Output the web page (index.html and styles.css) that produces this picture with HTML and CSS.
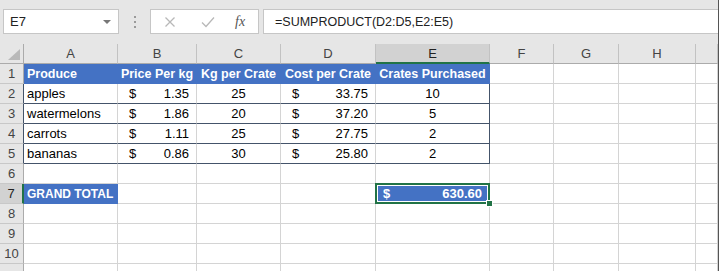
FILE: index.html
```html
<!DOCTYPE html>
<html lang="en">

<head>
    <meta charset="UTF-8">
    <meta name="viewport" content="width=device-width, initial-scale=1.0">
    <title>Produce Sheet</title>
    <link rel="stylesheet" href="styles.css">
</head>

<body>
    <div class="app">
        <div class="toolbar">
            <div class="name-box">
                <span>E7</span>
                <span class="caret"></span>
            </div>
            <div class="grip">
                <svg width="4" height="12" viewBox="0 0 4 12">
                    <rect x="1" y="0" width="2" height="2" fill="#9a9a9a" />
                    <rect x="1" y="5" width="2" height="2" fill="#9a9a9a" />
                    <rect x="1" y="10" width="2" height="2" fill="#9a9a9a" />
                </svg>
            </div>
            <div class="fx-buttons">
                <svg class="btn-icon" width="12" height="12" viewBox="0 0 12 12">
                    <path d="M1.5 1.5 L10.5 10.5 M10.5 1.5 L1.5 10.5" stroke="#b8b8b8" stroke-width="1.3" fill="none" />
                </svg>
                <svg class="btn-icon" width="14" height="12" viewBox="0 0 14 12">
                    <path d="M1 6.5 L5 10.5 L13 1.5" stroke="#b8b8b8" stroke-width="1.3" fill="none" />
                </svg>
                <span class="fx">fx</span>
            </div>
            <div class="formula">=SUMPRODUCT(D2:D5,E2:E5)</div>
        </div>

        <div class="sheet">
            <!-- column headers -->
            <div class="corner">
                <svg width="14" height="12" viewBox="0 0 14 12">
                    <polygon points="13,0 13,11 1,11" fill="#b9b9b9" />
                </svg>
            </div>
            <div class="ch">A</div>
            <div class="ch">B</div>
            <div class="ch">C</div>
            <div class="ch">D</div>
            <div class="ch ch-active">E</div>
            <div class="ch">F</div>
            <div class="ch">G</div>
            <div class="ch">H</div>
            <div class="ch"></div>

            <!-- row 1 -->
            <div class="rh">1</div>
            <div class="c hd">Produce</div>
            <div class="c hd ctr">Price Per kg</div>
            <div class="c hd ctr">Kg per Crate</div>
            <div class="c hd ctr">Cost per Crate</div>
            <div class="c hd ctr">Crates Purchased</div>
            <div class="c"></div>
            <div class="c"></div>
            <div class="c"></div>
            <div class="c"></div>

            <!-- row 2 -->
            <div class="rh rh-tb">2</div>
            <div class="c tb">apples</div>
            <div class="c tb cur"><span>$</span><span>1.35</span></div>
            <div class="c tb ctr">25</div>
            <div class="c tb cur"><span>$</span><span>33.75</span></div>
            <div class="c tb tr ctr">10</div>
            <div class="c"></div>
            <div class="c"></div>
            <div class="c"></div>
            <div class="c"></div>

            <!-- row 3 -->
            <div class="rh rh-tb">3</div>
            <div class="c tb">watermelons</div>
            <div class="c tb cur"><span>$</span><span>1.86</span></div>
            <div class="c tb ctr">20</div>
            <div class="c tb cur"><span>$</span><span>37.20</span></div>
            <div class="c tb tr ctr">5</div>
            <div class="c"></div>
            <div class="c"></div>
            <div class="c"></div>
            <div class="c"></div>

            <!-- row 4 -->
            <div class="rh rh-tb">4</div>
            <div class="c tb">carrots</div>
            <div class="c tb cur"><span>$</span><span>1.11</span></div>
            <div class="c tb ctr">25</div>
            <div class="c tb cur"><span>$</span><span>27.75</span></div>
            <div class="c tb tr ctr">2</div>
            <div class="c"></div>
            <div class="c"></div>
            <div class="c"></div>
            <div class="c"></div>

            <!-- row 5 -->
            <div class="rh rh-tb">5</div>
            <div class="c tb">bananas</div>
            <div class="c tb cur"><span>$</span><span>0.86</span></div>
            <div class="c tb ctr">30</div>
            <div class="c tb cur"><span>$</span><span>25.80</span></div>
            <div class="c tb tr ctr">2</div>
            <div class="c"></div>
            <div class="c"></div>
            <div class="c"></div>
            <div class="c"></div>

            <!-- row 6 -->
            <div class="rh">6</div>
            <div class="c"></div>
            <div class="c"></div>
            <div class="c"></div>
            <div class="c"></div>
            <div class="c"></div>
            <div class="c"></div>
            <div class="c"></div>
            <div class="c"></div>
            <div class="c"></div>

            <!-- row 7 -->
            <div class="rh rh-active">7</div>
            <div class="c hd total">GRAND TOTAL</div>
            <div class="c"></div>
            <div class="c"></div>
            <div class="c"></div>
            <div class="c hd cur sel"><span>$</span><span>630.60</span></div>
            <div class="c"></div>
            <div class="c"></div>
            <div class="c"></div>
            <div class="c"></div>

            <!-- row 8 -->
            <div class="rh">8</div>
            <div class="c"></div>
            <div class="c"></div>
            <div class="c"></div>
            <div class="c"></div>
            <div class="c"></div>
            <div class="c"></div>
            <div class="c"></div>
            <div class="c"></div>
            <div class="c"></div>

            <!-- row 9 -->
            <div class="rh">9</div>
            <div class="c"></div>
            <div class="c"></div>
            <div class="c"></div>
            <div class="c"></div>
            <div class="c"></div>
            <div class="c"></div>
            <div class="c"></div>
            <div class="c"></div>
            <div class="c"></div>

            <!-- row 10 -->
            <div class="rh">10</div>
            <div class="c"></div>
            <div class="c"></div>
            <div class="c"></div>
            <div class="c"></div>
            <div class="c"></div>
            <div class="c"></div>
            <div class="c"></div>
            <div class="c"></div>
            <div class="c"></div>

            <!-- row 11, only its top edge shows -->
            <div class="rh"></div>
            <div class="c"></div>
            <div class="c"></div>
            <div class="c"></div>
            <div class="c"></div>
            <div class="c"></div>
            <div class="c"></div>
            <div class="c"></div>
            <div class="c"></div>
            <div class="c"></div>
        </div>
    </div>
</body>

</html>
```

FILE: styles.css
```css
body {
    margin: 0;
    font-family: "Liberation Sans", Arial, sans-serif;
    background-color: #e6e6e6;
    overflow: hidden;
}

.app {
    width: 719px;
    height: 271px;
    box-sizing: border-box;
    border-right: 1px solid #555;
    overflow: hidden;
    background-color: #e6e6e6;
}

/* formula toolbar */
.toolbar {
    height: 44px;
    display: flex;
    align-items: flex-start;
    padding-top: 9px;
    box-sizing: border-box;
}

.name-box {
    margin-left: 3px;
    width: 116px;
    height: 25px;
    box-sizing: border-box;
    background-color: #fff;
    border: 1px solid #c6c6c6;
    display: flex;
    align-items: center;
    justify-content: space-between;
    padding: 0 7px 0 6px;
    font-size: 13px;
    color: #222;
}

.caret {
    width: 0;
    height: 0;
    border-left: 4px solid transparent;
    border-right: 4px solid transparent;
    border-top: 4px solid #777;
}

.grip {
    width: 31px;
    height: 25px;
    display: flex;
    align-items: center;
    justify-content: center;
}

.fx-buttons {
    width: 109px;
    height: 25px;
    box-sizing: border-box;
    background-color: #fff;
    border: 1px solid #c6c6c6;
    display: flex;
    align-items: center;
    padding-left: 13px;
}

.btn-icon:first-child {
    margin-right: 25px;
}

.btn-icon {
    margin-right: 20px;
}

.fx {
    font-family: "Liberation Serif", serif;
    font-style: italic;
    font-size: 14px;
    color: #555;
}

.formula {
    margin-left: 4px;
    flex: 1;
    height: 25px;
    box-sizing: border-box;
    background-color: #fff;
    border: 1px solid #c6c6c6;
    border-right: none;
    display: flex;
    align-items: center;
    padding-left: 11px;
    font-size: 12.5px;
    color: #222;
}

/* sheet grid */
.sheet {
    display: grid;
    grid-template-columns: 24px 94px 79px 84px 95px 114px 64px 65px 77px 1fr;
    grid-auto-rows: 20px;
    background-color: #fff;
    font-size: 13px;
}

.corner,
.ch,
.rh {
    background-color: #e6e6e6;
    box-sizing: border-box;
    color: #444;
    font-size: 13px;
}

.corner {
    border-right: 1px solid #ababab;
    border-bottom: 1px solid #ababab;
    display: flex;
    align-items: flex-end;
    justify-content: flex-end;
    padding: 0 2px 2px 0;
}

.ch {
    border-right: 1px solid #c2c2c2;
    border-bottom: 1px solid #ababab;
    display: flex;
    align-items: center;
    justify-content: center;
}

.ch-active {
    background-color: #d2d2d2;
    border-bottom: 2px solid #217346;
    color: #222;
}

.rh {
    border-right: 1px solid #ababab;
    border-bottom: 1px solid #c8c8c8;
    display: flex;
    align-items: center;
    justify-content: center;
}

.rh-tb {
    border-right-color: #44546a;
}

.rh-active {
    background-color: #d2d2d2;
    border-right: 2px solid #217346;
    color: #222;
}

.c {
    box-sizing: border-box;
    border-right: 1px solid #d4d4d4;
    border-bottom: 1px solid #d4d4d4;
    display: flex;
    align-items: center;
    padding: 0 3px;
    white-space: nowrap;
    color: #000;
}

.ctr {
    justify-content: center;
}

.cur {
    justify-content: space-between;
    padding: 0 7px 0 11px;
}

.hd {
    background-color: #4472c4;
    border-color: #4472c4;
    color: #fff;
    font-weight: bold;
    font-size: 12.5px;
}

.tb {
    border-bottom-color: #44546a;
}

.tr {
    border-right-color: #44546a;
}

.total {
    font-size: 12px;
}

.sel {
    position: relative;
    padding: 0 7px 0 7px;
    font-size: 13px;
}

.sel::after {
    content: "";
    position: absolute;
    top: -1px;
    left: -1px;
    right: -1px;
    bottom: -1px;
    border: 2px solid #217346;
    box-shadow: inset 0 0 0 1px #fff;
}

.sel::before {
    content: "";
    position: absolute;
    right: -4px;
    bottom: -4px;
    width: 5px;
    height: 5px;
    background-color: #217346;
    border: 1px solid #fff;
    z-index: 1;
}
```
